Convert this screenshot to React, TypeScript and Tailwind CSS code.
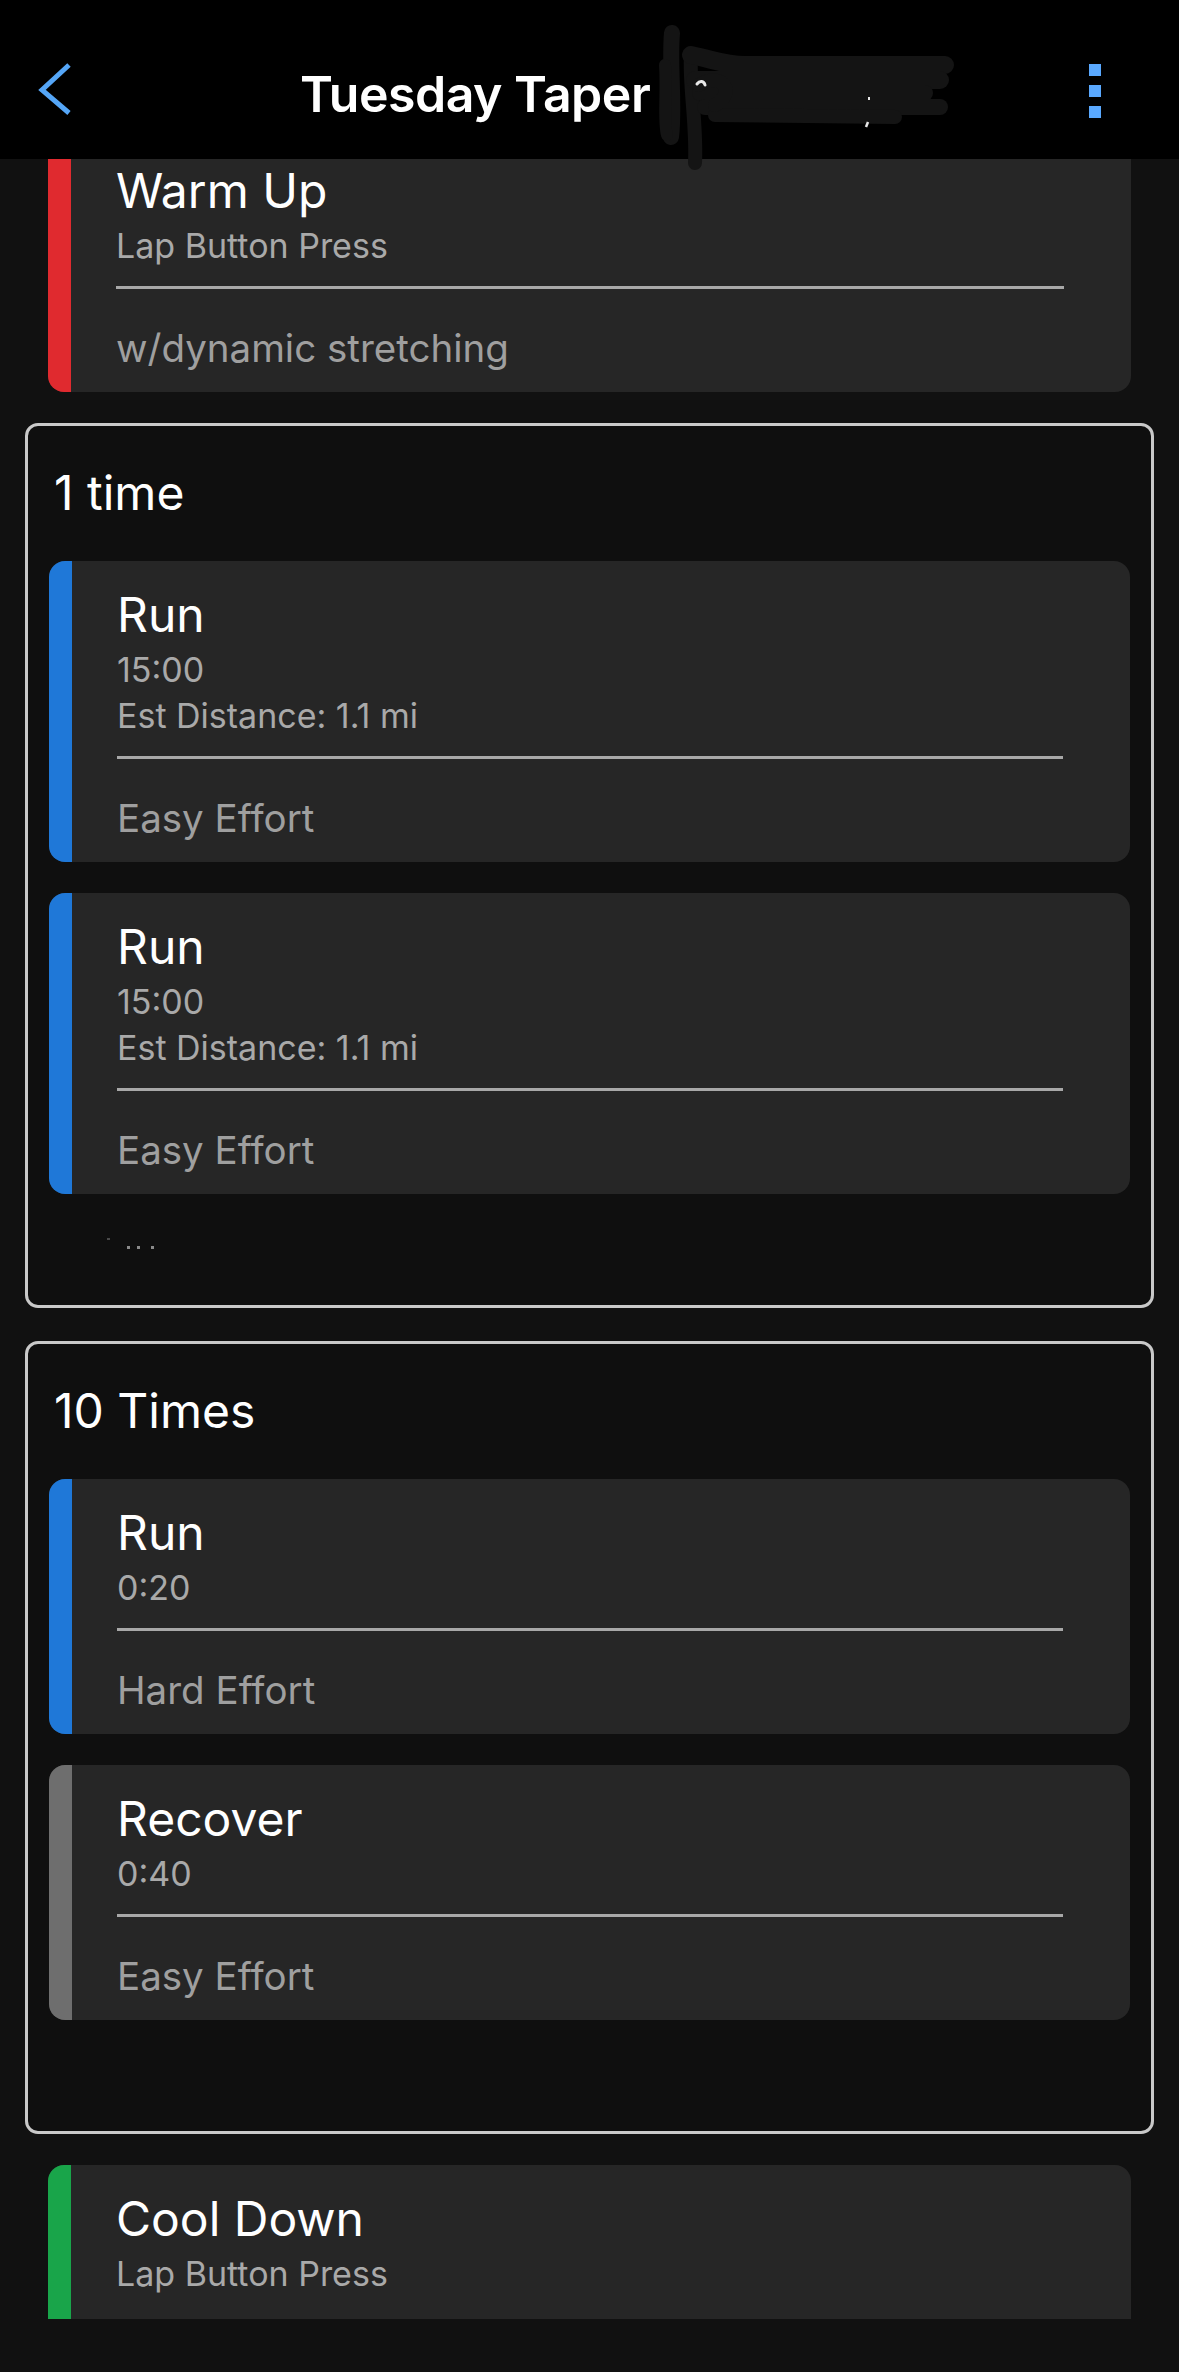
import React from "react";

type Step = {
  title: string;
  subs: string[];
  note?: string;
  bar: string;
};

const font = { fontFamily: "Inter, 'Noto Sans', sans-serif" };

function StepCard({ step, className = "", extraBottom = false }: { step: Step; className?: string; extraBottom?: boolean }) {
  return (
    <div className={`flex overflow-hidden rounded-[16px] bg-[#262626] ${className}`}>
      <div className="w-[23px] shrink-0" style={{ backgroundColor: step.bar }} />
      <div className={`flex-1 pl-[45px] pr-[67px] pt-[26px] ${extraBottom ? "pb-[80px]" : "pb-[21px]"}`}>
        <div className="text-[48px] leading-[56px] text-white">{step.title}</div>
        <div className="mt-[4px]">
          {step.subs.map((s) => (
            <div key={s} className="text-[34px] leading-[46px] text-[#a9a9a9]">
              {s}
            </div>
          ))}
        </div>
        {step.note !== undefined && (
          <>
            <div className="mt-[17px] h-[3px] bg-[#a8a8a8]" />
            <div className="mt-[36px] text-[38.5px] leading-[46px] text-[#9f9f9f]">{step.note}</div>
          </>
        )}
      </div>
    </div>
  );
}

function Group({
  label,
  steps,
  className = "",
  dots = false,
}: {
  label: string;
  steps: Step[];
  className?: string;
  dots?: boolean;
}) {
  return (
    <div className={`rounded-[13px] border-[3px] border-[#c9c9c9] bg-[#0f0f0f] px-[21px] pt-[39px] ${className}`}>
      <div className="pl-[5px] text-[48px] leading-[55px] text-white">{label}</div>
      <div className="mt-[41px] flex flex-col gap-[31px]">
        {steps.map((s, i) => (
          <StepCard key={i} step={s} />
        ))}
      </div>
      <div className="h-[111px] pl-[58px] pt-[44px]">
        {dots && (
          <div className="flex items-start">
            <div className="h-[2px] w-[3px] bg-[#4a4a4a]" />
            <div className="ml-[17px] mt-[8px] h-[3px] w-[3px] bg-[#8a8a8a]" />
            <div className="ml-[7px] mt-[8px] h-[3px] w-[3px] bg-[#8a8a8a]" />
            <div className="ml-[11px] mt-[8px] h-[3px] w-[3px] bg-[#8a8a8a]" />
          </div>
        )}
      </div>
    </div>
  );
}

export default function App() {
  const warm: Step = { title: "Warm Up", subs: ["Lap Button Press"], note: "w/dynamic stretching", bar: "#e02a2f" };
  const run15: Step = { title: "Run", subs: ["15:00", "Est Distance: 1.1 mi"], note: "Easy Effort", bar: "#1f78d8" };
  const run20: Step = { title: "Run", subs: ["0:20"], note: "Hard Effort", bar: "#1f78d8" };
  const recover: Step = { title: "Recover", subs: ["0:40"], note: "Easy Effort", bar: "#6e6e6e" };
  const cool: Step = { title: "Cool Down", subs: ["Lap Button Press"], bar: "#19a54a" };

  return (
    <div className="relative flex h-[2372px] w-[1179px] flex-col overflow-hidden bg-[#111111]" style={font}>
      {/* Header */}
      <div className="relative z-10 flex h-[159px] shrink-0 items-center bg-black pt-[23px]">
        <svg className="ml-[36px] shrink-0" width="40" height="60" viewBox="0 0 40 60" fill="none">
          <path d="M33 4 L6 29 L33 52" stroke="#55a6f7" strokeWidth="5" strokeLinecap="butt" strokeLinejoin="miter" />
        </svg>
        <div className="ml-[224px] mt-[5px] text-[50px] font-semibold leading-[60px] tracking-[-0.5px] text-white">
          Tuesday Taper
        </div>
        <div className="flex-1" />
        <div className="mr-[78px] flex flex-col gap-[9px]">
          <div className="h-[12px] w-[12px] bg-[#5aa9ff]" />
          <div className="h-[12px] w-[12px] bg-[#5aa9ff]" />
          <div className="h-[12px] w-[12px] bg-[#5aa9ff]" />
        </div>
      </div>

      {/* Content */}
      <div className="h-[2160px] shrink-0 overflow-hidden">
        <div className="mt-[-22px] flex flex-col px-[25px]">
          <StepCard step={warm} className="ml-[23px] mr-[23px]" />
          <Group label="1 time" steps={[run15, run15]} className="mt-[31px]" dots />
          <Group label="10 Times" steps={[run20, recover]} className="mt-[33px]" />
          <StepCard step={cool} className="ml-[23px] mr-[23px] mt-[31px]" extraBottom />
        </div>
      </div>
      <div className="flex-1 bg-[#111111]" />

      {/* Redaction scribble over the title */}
      <svg
        className="pointer-events-none absolute left-[655px] top-[25px] z-20"
        width="310"
        height="150"
        viewBox="0 0 310 150"
        fill="none"
      >
        <path d="M17 8 C14 40 20 80 16 112" stroke="#141414" strokeWidth="16" strokeLinecap="round" />
        <path d="M10 40 C12 70 8 95 12 110" stroke="#141414" strokeWidth="12" strokeLinecap="round" />
        <path d="M36 30 C34 60 42 100 40 138" stroke="#141414" strokeWidth="14" strokeLinecap="round" />
        <path d="M36 30 C60 35 70 40 90 40 L290 40" stroke="#141414" strokeWidth="18" strokeLinecap="round" />
        <path d="M40 55 L285 55" stroke="#141414" strokeWidth="18" strokeLinecap="round" />
        <path d="M45 68 L270 68" stroke="#141414" strokeWidth="16" strokeLinecap="round" />
        <path d="M50 82 L285 82" stroke="#141414" strokeWidth="16" strokeLinecap="round" />
        <path d="M60 90 L240 92" stroke="#141414" strokeWidth="14" strokeLinecap="round" />
        <path d="M44 60 C70 45 80 70 60 80" stroke="#141414" strokeWidth="14" strokeLinecap="round" />
        <path d="M42 59 C45 55 49 56 50 60" stroke="#e8e8e8" strokeWidth="3" strokeLinecap="round" />
        <path d="M214 72 L214 75" stroke="#e8e8e8" strokeWidth="2" />
        <path d="M213 97 L211 102" stroke="#e8e8e8" strokeWidth="2.5" />
      </svg>
    </div>
  );
}
